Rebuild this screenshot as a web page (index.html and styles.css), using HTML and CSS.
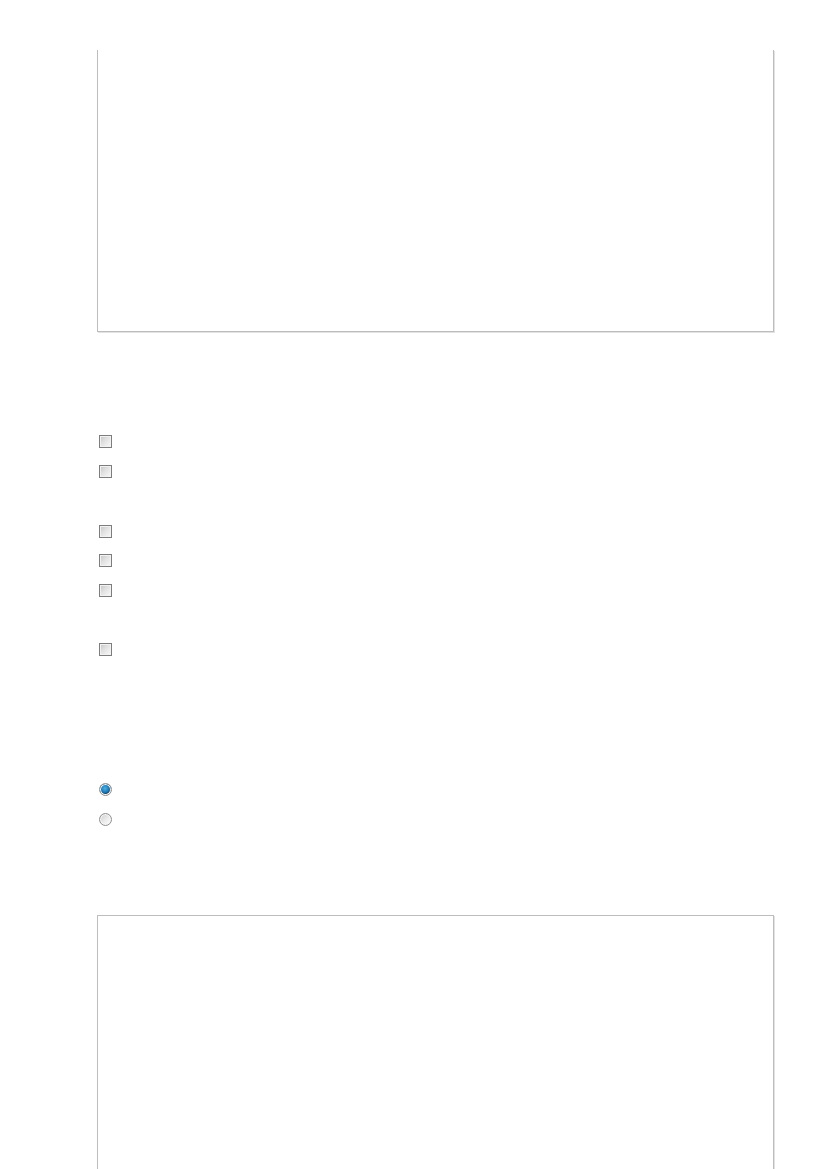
FILE: index.html
```html
<!DOCTYPE html>
<html lang="en">
<head>
    <meta charset="UTF-8">
    <meta name="viewport" content="width=device-width, initial-scale=1.0">
    <title>Settings</title>
    <link rel="stylesheet" href="styles.css">
</head>
<body>
    <div class="page">
        <div class="panel panel-top"></div>

        <div class="options">
            <label class="opt"><input type="checkbox" class="check"></label>
            <label class="opt"><input type="checkbox" class="check"></label>
            <div class="opt blank"></div>
            <label class="opt"><input type="checkbox" class="check"></label>
            <label class="opt"><input type="checkbox" class="check"></label>
            <label class="opt"><input type="checkbox" class="check"></label>
            <div class="opt blank"></div>
            <label class="opt"><input type="checkbox" class="check"></label>
        </div>

        <div class="choices">
            <label class="opt"><input type="radio" name="mode" class="radio" checked></label>
            <label class="opt"><input type="radio" name="mode" class="radio"></label>
        </div>

        <div class="panel panel-bottom"></div>
    </div>
</body>
</html>
```

FILE: styles.css
```css
body, html {
    margin: 0;
    padding: 0;
    font-family: "Liberation Sans", Arial, sans-serif;
    font-size: 13px;
    background-color: #fff;
    color: #333;
}
.page {
    padding: 0 53px 0 97px;
    overflow: hidden;
    height: 1169px;
    box-sizing: border-box;
}
.panel {
    border: 1px solid #bdbdbd;
    box-shadow: 1px 1px 0 #e2e2e2;
    background-color: #fff;
}
.panel-top {
    margin-top: 50px;
    height: 281px;
    border-top: none;
}
.panel-bottom {
    margin-top: 72px;
    height: 400px;
    border-bottom: none;
}
.options {
    margin-top: 103px;
}
.choices {
    margin-top: 110px;
}
.opt {
    display: flex;
    align-items: flex-start;
    height: 30px;
}
.options .opt:nth-child(n+3) {
    height: 29.7px;
}
.check, .radio {
    -webkit-appearance: none;
    appearance: none;
    width: 13px;
    height: 13px;
    margin: 0 0 0 2px;
    box-sizing: border-box;
    position: relative;
}
.check {
    border: 1px solid #7d7d7d;
    box-shadow: inset 0 0 0 1px #f2f2f2;
    background: linear-gradient(135deg, #c4c4c4 0%, #e2e2e2 45%, #fafafa 100%);
}
.radio {
    border-radius: 50%;
    border: 1px solid #8f8f8f;
    box-shadow: inset 0 0 0 1px #f6f6f6;
    background: linear-gradient(135deg, #cdcdcd 0%, #ececec 55%, #ffffff 100%);
}
.radio:checked {
    background: radial-gradient(circle at 45% 40%, #4fb0e6 0%, #1877b4 45%, #0e3f63 62%, #f2f2f2 70%, #e2e2e2 100%);
}
```
